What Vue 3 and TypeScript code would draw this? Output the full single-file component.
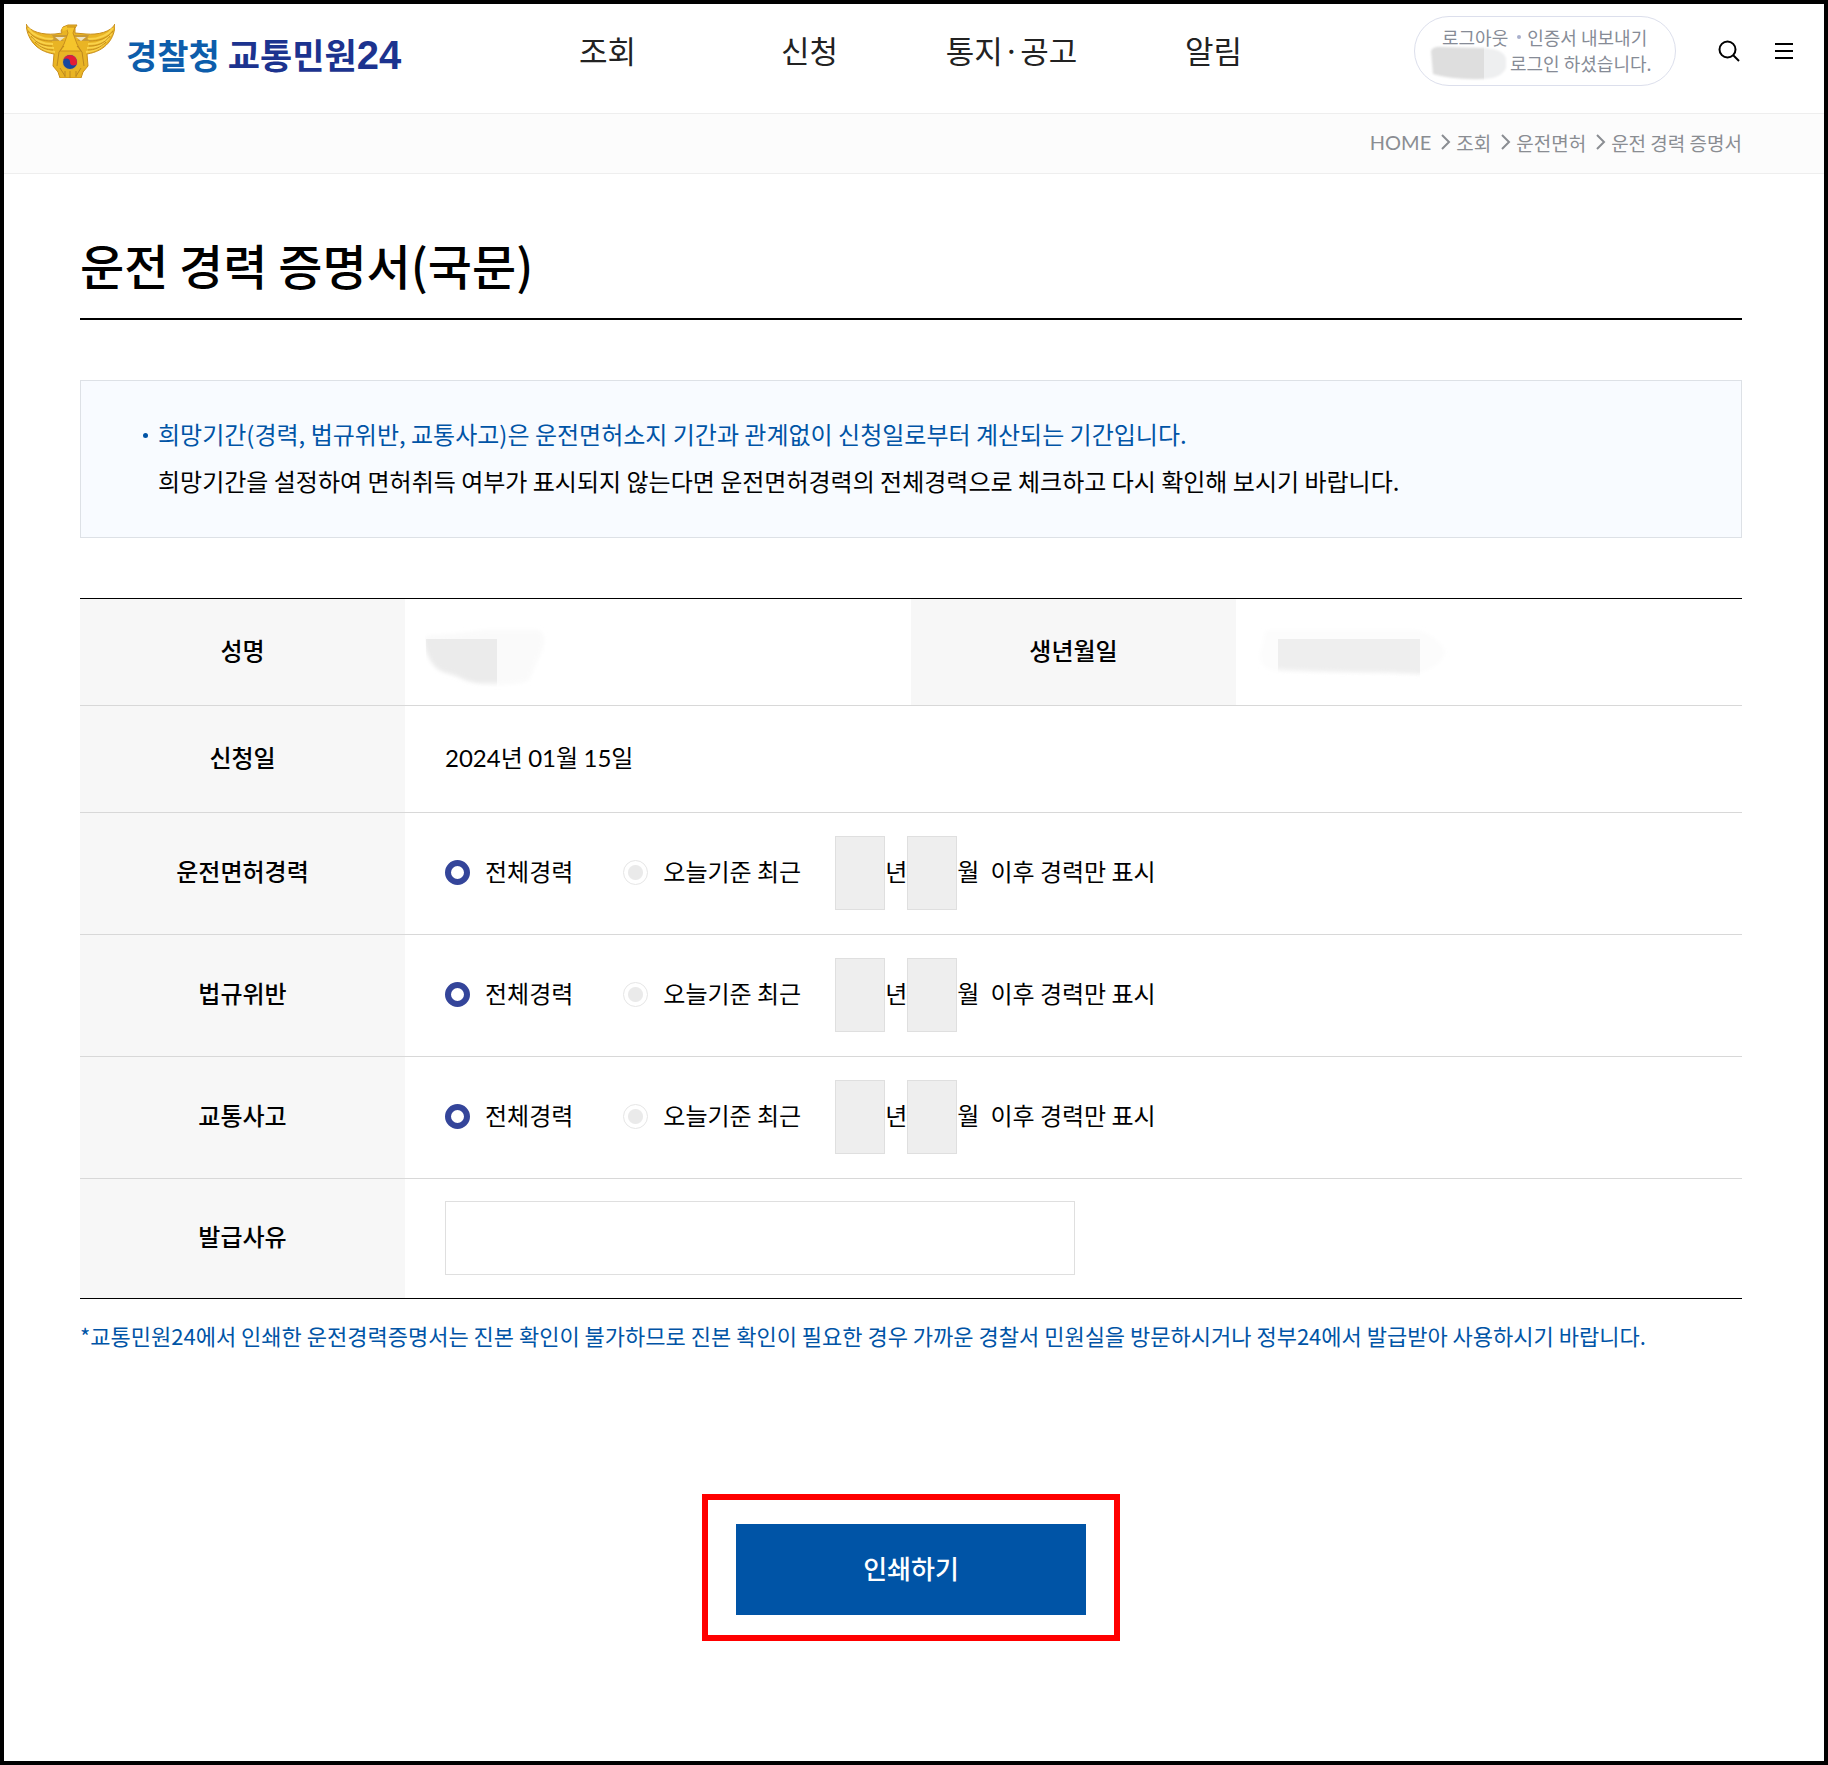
<script setup lang="ts">
import { reactive, ref } from 'vue'

interface HistoryRow {
  id: string
  label: string
  scope: 'all' | 'recent'
  years: string
  months: string
}

const menu: string[] = ['조회', '신청', '통지·공고', '알림']
const trail: string[] = ['조회', '운전면허', '운전 경력 증명서']

const rows = reactive<HistoryRow[]>([
  { id: 'license', label: '운전면허경력', scope: 'all', years: '', months: '' },
  { id: 'violation', label: '법규위반', scope: 'all', years: '', months: '' },
  { id: 'accident', label: '교통사고', scope: 'all', years: '', months: '' },
])
const reason = ref('')

function printCertificate(): void {
  window.print()
}
</script>

<template>
  <div class="page">
    <header class="header">
      <a href="#" class="logo">
        <svg class="emblem" viewBox="0 0 89 54" aria-hidden="true">
          <path d="M0 0C4 8 17 11 29 10L36 9L35 7L37 3L42 1H51L49 4V9L60 10C72 11 85 8 89 0C89 14 80 27 61 30L62 42L57 48L55 54H34L32 48L27 42L28 30C9 27 1 14 0 0Z" fill="#e9b424" stroke="#c98f1d" stroke-width="1" />
          <path d="M2 4C8 13 18 15 27 15M3 9C9 18 18 20 27 20M6 14C12 22 20 24 28 24M11 20C17 26 22 27 29 28M87 4C81 13 71 15 62 15M86 9C80 18 71 20 62 20M83 14C77 22 69 24 61 24M78 20C72 26 67 27 60 28" fill="none" stroke="#f9d24a" stroke-width="2" />
          <path d="M2 7C8 15 17 17 26 17M5 12C11 20 18 22 26 22M9 18C15 24 21 26 27 26M87 7C81 15 72 17 63 17M84 12C78 20 71 22 63 22M80 18C74 24 68 26 62 26" fill="none" stroke="#c8901d" stroke-width="1" />
          <path d="M26 11H63L61 15L66 17H51L55 13H33L38 17H23L28 15Z" fill="#c99a34" />
          <path d="M29 13H39L34 17ZM50 13H60L55 17Z" fill="#eee3c4" />
          <path d="M40 3H49L47 9L51 20L55 27H34L38 20L42 9Z" fill="#f5c52c" stroke="#c98f1d" stroke-width="1" />
          <path d="M36 4L41 2V6L37 7Z" fill="#f5c52c" />
          <path d="M33 28L31 42M56 28L58 42M34 44L39 52M55 44L50 52M44 47V54M39 47V53M50 47V53M38 22L33 28M51 22L56 28" stroke="#bd881e" stroke-width="1" />
          <circle cx="44" cy="38" r="8" fill="#d7ac3a" />
          <circle cx="44" cy="38" r="7" fill="#17479e" />
          <path d="M37 38A7 7 0 0 1 51 38A3.500 3.500 0 0 1 44 38A3.500 3.500 0 0 0 37 38Z" fill="#e51b35" />
        </svg>
        <span class="logo-text"><span class="agency">경찰청</span><span class="service">교통민원<span class="num">24</span></span></span>
      </a>
      <nav class="menu">
        <a v-for="item in menu" :key="item" href="#">{{ item }}</a>
      </nav>
      <div class="tools">
        <div class="account">
          <div class="account-links">
            <a href="#">로그아웃</a><i class="dot"></i><a href="#">인증서 내보내기</a>
          </div>
          <div class="account-state">
            <svg class="mask-user" viewBox="0 0 81 36" aria-hidden="true">
              <defs>
                <filter id="soft-user" x="-10%" y="-10%" width="120%" height="120%"><feGaussianBlur stdDeviation="1" /></filter>
                <clipPath id="user-left"><rect width="55" height="36" /></clipPath>
                <clipPath id="user-right"><rect x="55" width="26" height="36" /></clipPath>
              </defs>
              <g clip-path="url(#user-left)"><path d="M2 6Q4 1 14 2L55 3Q75 4 77 14V23Q73 33 55 34Q22 35 4 29Z" fill="#dedede" filter="url(#soft-user)" /></g>
              <g clip-path="url(#user-right)"><path d="M2 6Q4 1 14 2L55 3Q75 4 77 14V23Q73 33 55 34Q22 35 4 29Z" fill="#eeeff0" filter="url(#soft-user)" /></g>
            </svg>
            <span>로그인 하셨습니다.</span>
          </div>
        </div>
        <button type="button" class="icon-button" aria-label="검색">
          <svg viewBox="0 0 22 22" width="22" height="22"><circle cx="9.500" cy="9.500" r="8" /><path d="M15 15L21 21" /></svg>
        </button>
        <button type="button" class="icon-button" aria-label="전체메뉴">
          <svg viewBox="0 0 22 22" width="22" height="22"><path d="M2 4H20M2 11H20M2 18H20" /></svg>
        </button>
      </div>
    </header>

    <nav class="trail">
      <a href="#" class="latin">HOME</a>
      <template v-for="step in trail" :key="step">
        <svg viewBox="0 0 10 16" width="10" height="16" aria-hidden="true"><path d="M1 1L8 8L1 15" /></svg>
        <a href="#">{{ step }}</a>
      </template>
    </nav>

    <main class="content">
      <h1>운전 경력 증명서(국문)</h1>

      <section class="notice">
        <ul>
          <li>
            <em>희망기간(경력, 법규위반, 교통사고)은 운전면허소지 기간과 관계없이 신청일로부터 계산되는 기간입니다.</em>
            <p>희망기간을 설정하여 면허취득 여부가 표시되지 않는다면 운전면허경력의 전체경력으로 체크하고 다시 확인해 보시기 바랍니다.</p>
          </li>
        </ul>
      </section>

      <form @submit.prevent="printCertificate">
        <table>
          <colgroup>
            <col class="col-label" /><col /><col class="col-label" /><col />
          </colgroup>
          <tbody>
            <tr class="short">
              <th scope="row">성명</th>
              <td class="masked">
                <svg viewBox="0 0 130 80" width="130" height="80" aria-hidden="true">
                  <defs>
                    <filter id="soft-name" x="-10%" y="-10%" width="120%" height="120%"><feGaussianBlur stdDeviation="2" /></filter>
                    <clipPath id="name-block"><rect x="1" y="27" width="71" height="50" /></clipPath>
                  </defs>
                  <path d="M0 24Q30 22 60 18H112Q122 20 118 36L104 68Q94 74 60 72L20 60Q2 50 0 24Z" fill="#fafafa" filter="url(#soft-name)" />
                  <path d="M-1 20H76V71H52Q40 69 32 64L16 59Q3 52-1 30Z" fill="#ebebeb" filter="url(#soft-name)" clip-path="url(#name-block)" />
                </svg>
              </td>
              <th scope="row">생년월일</th>
              <td class="masked">
                <svg viewBox="0 0 204 80" width="204" height="80" aria-hidden="true">
                  <defs>
                    <filter id="soft-birth" x="-10%" y="-10%" width="120%" height="120%"><feGaussianBlur stdDeviation="2" /></filter>
                    <clipPath id="birth-block"><rect x="22" y="27" width="142" height="40" /></clipPath>
                  </defs>
                  <path d="M10 18H160Q180 22 190 40Q184 56 160 62L22 60Q2 56 4 42Z" fill="#fcfcfc" filter="url(#soft-birth)" />
                  <path d="M16 20H170V62L130 60Q70 60 16 57Z" fill="#eee" filter="url(#soft-birth)" clip-path="url(#birth-block)" />
                </svg>
              </td>
            </tr>
            <tr class="short">
              <th scope="row">신청일</th>
              <td class="value" colspan="3"><span class="latin">2024</span>년 <span class="latin">01</span>월 <span class="latin">15</span>일</td>
            </tr>
            <tr v-for="row in rows" :key="row.id">
              <th scope="row">{{ row.label }}</th>
              <td colspan="3">
                <div class="options">
                  <label class="choice">
                    <input v-model="row.scope" type="radio" :name="row.id" value="all" />
                    <span>전체경력</span>
                  </label>
                  <label class="choice">
                    <input v-model="row.scope" type="radio" :name="row.id" value="recent" />
                    <span>오늘기준 최근</span>
                  </label>
                  <div class="period">
                    <input :id="row.id + '-years'" v-model="row.years" type="text" :disabled="row.scope === 'all'" />
                    <label :for="row.id + '-years'">년</label>
                    <input :id="row.id + '-months'" v-model="row.months" type="text" :disabled="row.scope === 'all'" />
                    <label :for="row.id + '-months'">월</label>
                  </div>
                  <span class="after">이후 경력만 표시</span>
                </div>
              </td>
            </tr>
            <tr class="last">
              <th scope="row"><label for="reason">발급사유</label></th>
              <td colspan="3"><input id="reason" v-model="reason" class="reason" type="text" /></td>
            </tr>
          </tbody>
        </table>
        <p class="footnote">*교통민원24에서 인쇄한 운전경력증명서는 진본 확인이 불가하므로 진본 확인이 필요한 경우 가까운 경찰서 민원실을 방문하시거나 정부24에서 발급받아 사용하시기 바랍니다.</p>
        <div class="highlight">
          <button type="submit" class="print">인쇄하기</button>
        </div>
      </form>
    </main>
  </div>
</template>

<style>
body {
  margin: 0;
  background: #fff;
}
</style>

<style scoped>
.page,
.page * {
  box-sizing: border-box;
}
.page {
  min-height: 100vh;
  border: 4px solid #000;
  background: #fff;
  color: #000;
  font-family: "Noto Sans CJK KR", "Noto Sans", sans-serif;
  font-size: 24px;
}
a {
  color: inherit;
  text-decoration: none;
}
button,
input {
  font: inherit;
  margin: 0;
}
.latin {
  font-family: Lato, "Noto Sans CJK KR", sans-serif;
}

.header {
  display: flex;
  align-items: flex-start;
  justify-content: space-between;
  height: 110px;
  padding: 12px 29px 0 22px;
  border-bottom: 1px solid #eee;
}
.logo {
  display: flex;
  align-items: center;
  gap: 11px;
  width: 480px;
  height: 70px;
}
.emblem {
  width: 89px;
  height: 54px;
}
.logo-text {
  display: flex;
  align-items: baseline;
  gap: 8px;
  font-size: 34px;
  font-weight: 700;
  line-height: 60px;
  padding-top: 6px;
}
.agency {
  color: #0d5dab;
}
.service {
  color: #1c338f;
  font-size: 35px;
}
.service .num {
  font-family: "Liberation Sans", sans-serif;
  font-size: 40px;
}
.menu {
  display: flex;
  line-height: 68px;
  font-size: 31px;
  color: #222;
}
.menu a {
  width: 202px;
  text-align: center;
}
.tools {
  display: flex;
  align-items: center;
  justify-content: flex-end;
  gap: 33px;
  width: 480px;
}
.account {
  width: 262px;
  height: 70px;
  margin-right: 9px;
  padding: 7px 14px;
  border: 1px solid #dcdfec;
  border-radius: 35px;
  color: #868b96;
  font-size: 18px;
  line-height: 26px;
  white-space: nowrap;
}
.account-links {
  display: flex;
  align-items: center;
  padding-left: 13px;
}
.dot {
  width: 4px;
  height: 4px;
  margin: 0 6px 0 9px;
  border-radius: 50%;
  background: #a9b0cd;
}
.account-state {
  display: flex;
  align-items: center;
}
.mask-user {
  width: 81px;
  height: 36px;
  margin: -5px 0;
}
.icon-button {
  width: 22px;
  height: 22px;
  padding: 0;
  border: 0;
  background: none;
}
.icon-button svg {
  display: block;
  fill: none;
  stroke: #000;
  stroke-width: 2;
}

.trail {
  display: flex;
  align-items: center;
  justify-content: flex-end;
  height: 60px;
  padding: 0 82px 3px 0;
  border-bottom: 1px solid #eee;
  background: #fcfcfc;
  color: #8a8d92;
  font-size: 19px;
}
.trail .latin {
  font-size: 20px;
}
.trail svg {
  margin: 0 5px 0 10px;
  fill: none;
  stroke: #8a8d92;
  stroke-width: 2;
}

.content {
  padding: 54px 82px 60px 76px;
}
h1 {
  margin: 0;
  padding-bottom: 18px;
  border-bottom: 2px solid #000;
  font-size: 48px;
  font-weight: 500;
  line-height: 72px;
}
.notice {
  margin: 60px 0;
  padding: 29px 64px 33px;
  border: 1px solid #dde1e6;
  background: #f8fbff;
  line-height: 47px;
}
.notice ul {
  margin: 0;
  padding: 0;
  list-style: none;
}
.notice li {
  position: relative;
  padding-left: 13px;
}
.notice li::before {
  content: "";
  position: absolute;
  left: -2px;
  top: 23px;
  width: 5px;
  height: 5px;
  border-radius: 50%;
  background: #0054a6;
}
.notice em {
  color: #0054a6;
  font-style: normal;
}
.notice p {
  margin: 0;
}

table {
  width: 100%;
  table-layout: fixed;
  border-collapse: separate;
  border-spacing: 0;
  border-top: 1px solid #000;
  border-bottom: 1px solid #000;
}
.col-label {
  width: 325px;
}
tr {
  height: 122px;
}
tr.short {
  height: 107px;
}
tr.last {
  height: 119px;
}
th,
td {
  border-bottom: 1px solid #d8d8d8;
}
.last th,
.last td {
  border-bottom: 0;
}
th {
  padding: 0 0 7px;
  background: #f7f7f7;
  font-weight: 500;
}
.short th {
  padding-bottom: 5px;
}
td {
  padding: 0 40px 2px;
}
td.value {
  padding-bottom: 5px;
}
td.masked {
  padding: 0 20px;
}
td.masked svg {
  display: block;
}
.options {
  display: flex;
  align-items: center;
  white-space: nowrap;
}
.choice {
  display: flex;
  align-items: center;
  gap: 15px;
  margin-right: 50px;
}
.choice span,
.period label,
.after {
  padding-bottom: 4px;
}
.choice + .choice {
  margin-right: 34px;
}
input[type="radio"] {
  appearance: none;
  width: 25px;
  height: 25px;
  border: 1px solid #e6e6e6;
  border-radius: 50%;
  background: radial-gradient(circle, #eaeaea 7px, #fff 8px);
}
input[type="radio"]:checked {
  border: 6px solid #34459a;
  background: #fff;
}
.period {
  display: flex;
  align-items: center;
}
.period input {
  width: 50px;
  height: 74px;
  padding: 0;
  border: 1px solid #dfdfdf;
  background: #eee;
  text-align: center;
}
.after {
  margin-left: 11px;
}
.reason {
  display: block;
  width: 630px;
  height: 74px;
  padding: 0 16px;
  border: 1px solid #dfdfdf;
  background: #fff;
}
.footnote {
  margin: 20px 0 0;
  color: #0054a6;
  font-size: 22px;
  line-height: 32px;
}
.highlight {
  width: 418px;
  margin: 143px auto 0;
  padding: 24px 28px 20px;
  border: 6px solid #f00;
}
.print {
  display: block;
  width: 100%;
  height: 91px;
  padding: 0 0 5px;
  border: 0;
  background: #0054a6;
  color: #fff;
  font-size: 26px;
  font-weight: 500;
}
</style>
